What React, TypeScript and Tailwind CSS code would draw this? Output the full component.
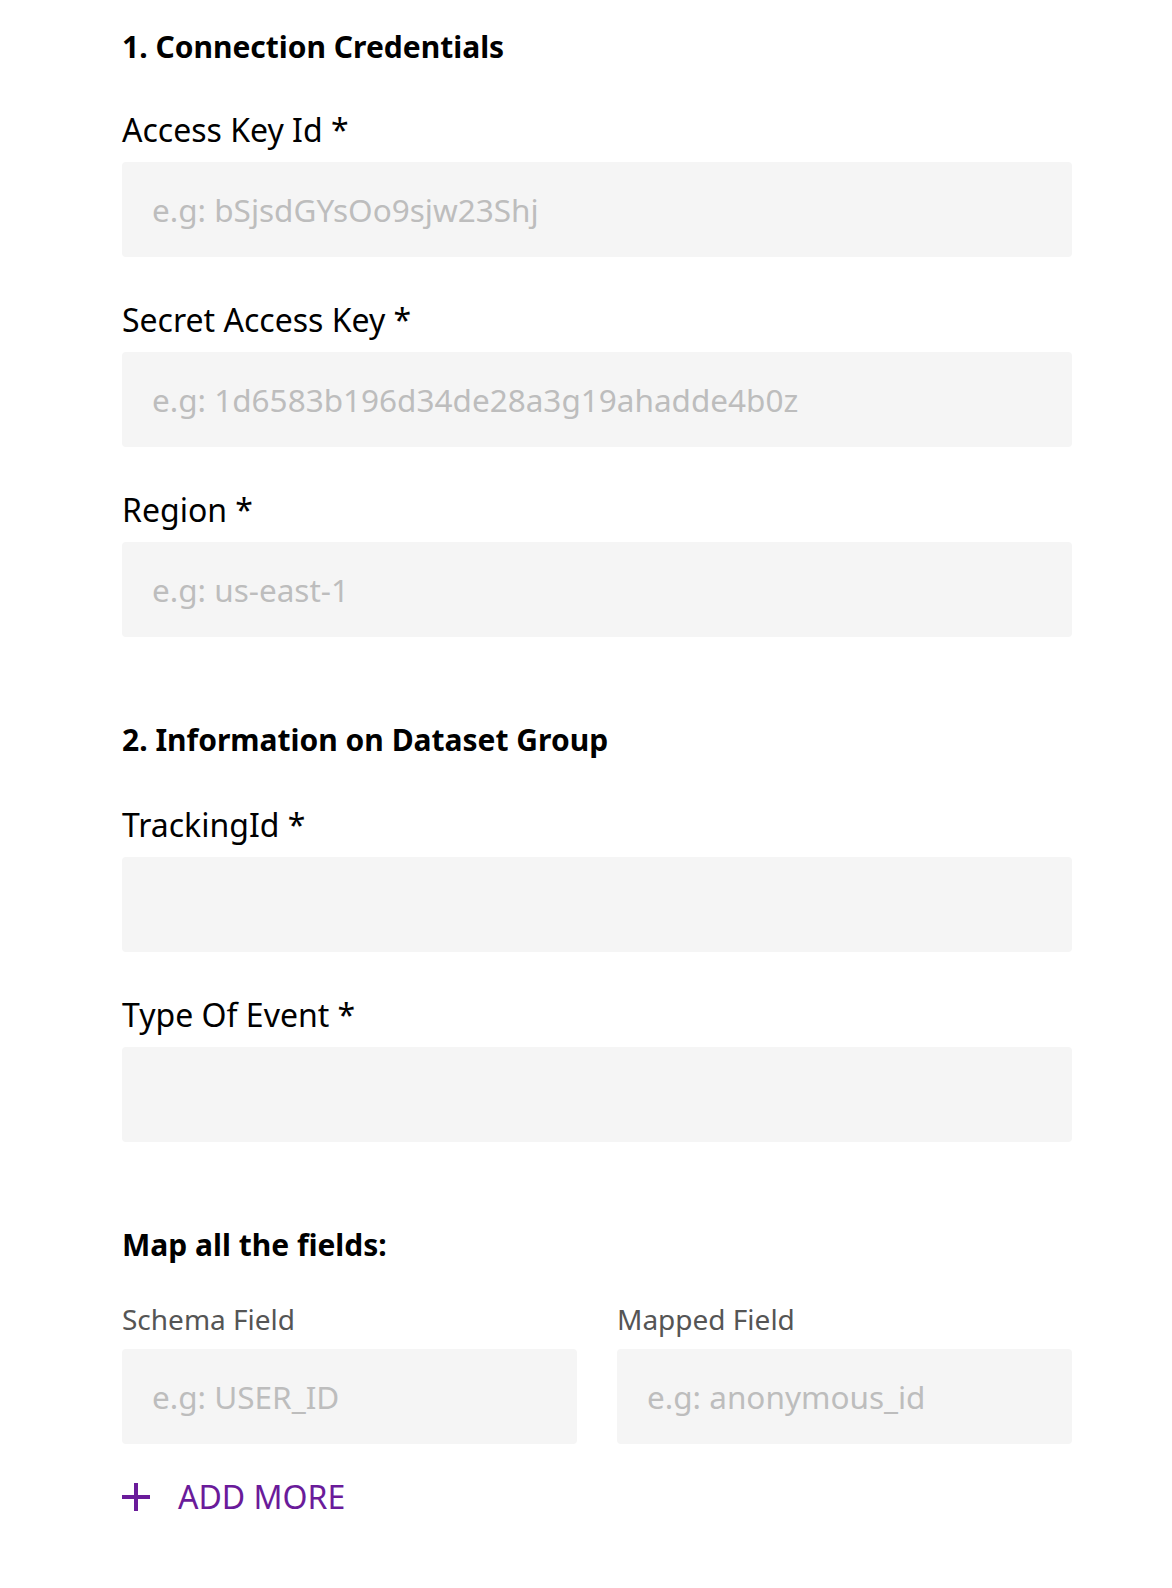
interface FieldProps {
  label: string
  placeholder?: string
  required?: boolean
  muted?: boolean
  className?: string
}

function Field({ label, placeholder, required, muted, className }: FieldProps) {
  return (
    <div className={className}>
      <label
        className={
          muted
            ? 'block text-[28px] leading-[40px] text-[#555555]'
            : 'block text-[32px] leading-[45px] text-black'
        }
      >
        {label}
        {required && ' *'}
      </label>
      <input
        type="text"
        placeholder={placeholder}
        className="mt-[10px] block h-[95px] w-full rounded-[4px] bg-[#f5f5f5] px-[30px] text-[31.5px] text-black outline-none placeholder:text-[#bdbdbd]"
      />
    </div>
  )
}

export default function App() {
  return (
    <div
      className="min-h-[1588px] bg-white"
      style={{ fontFamily: '"Noto Sans", "Open Sans", sans-serif' }}
    >
      <div className="ml-[122px] w-[950px] pt-[24px]">
        <h2 className="text-[30px] font-bold leading-[45px] text-black">1. Connection Credentials</h2>
        <Field className="mt-[38px]" label="Access Key Id" required placeholder="e.g: bSjsdGYsOo9sjw23Shj" />
        <Field className="mt-[40px]" label="Secret Access Key" required placeholder="e.g: 1d6583b196d34de28a3g19ahadde4b0z" />
        <Field className="mt-[40px]" label="Region" required placeholder="e.g: us-east-1" />

        <h2 className="mt-[80px] text-[30px] font-bold leading-[45px] text-black">
          2. Information on Dataset Group
        </h2>
        <Field className="mt-[40px]" label="TrackingId" required />
        <Field className="mt-[40px]" label="Type Of Event" required />

        <h3 className="mt-[80px] text-[30px] font-bold leading-[45px] text-black">Map all the fields:</h3>
        <div className="mt-[32px] grid grid-cols-2 gap-x-[40px]">
          <Field muted label="Schema Field" placeholder="e.g: USER_ID" />
          <Field muted label="Mapped Field" placeholder="e.g: anonymous_id" />
        </div>

        <button className="mt-[30px] flex items-center gap-[28px] text-[#6a1b9a]">
          <svg width="28" height="28" viewBox="0 0 28 28" fill="none" stroke="currentColor" strokeWidth="4">
            <path d="M14 0v28M0 14h28" />
          </svg>
          <span className="text-[32px] leading-[45px]">ADD MORE</span>
        </button>
      </div>
    </div>
  )
}
